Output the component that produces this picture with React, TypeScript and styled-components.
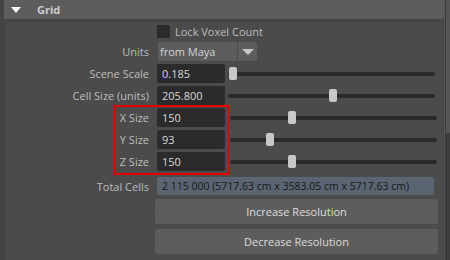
import React from "react";
import styled, { createGlobalStyle } from "styled-components";

const GlobalStyle = createGlobalStyle`
  html, body {
    margin: 0;
    padding: 0;
    background: #444444;
  }
  body {
    font-family: "Open Sans", "DejaVu Sans", sans-serif;
    font-size: 11px;
    color: #bdbdbd;
  }
`;

type SliderRow = { label: string; value: string; thumb: number; marked?: boolean };

const rows: SliderRow[] = [
  { label: "Scene Scale", value: "0.185", thumb: 1 },
  { label: "Cell Size (units)", value: "205.800", thumb: 101 },
  { label: "X Size", value: "150", thumb: 58, marked: true },
  { label: "Y Size", value: "93", thumb: 36, marked: true },
  { label: "Z Size", value: "150", thumb: 58, marked: true },
];

export default function App() {
  return (
    <>
      <GlobalStyle />
      <Screen>
        <Panel>
          <Header>
            <Caret />
            <Title>Grid</Title>
          </Header>
          <Body>
            <Row>
              <span />
              <CheckLine>
                <Check />
                <span>Lock Voxel Count</span>
              </CheckLine>
            </Row>
            <Row>
              <Label>Units</Label>
              <Dropdown>
                <DropValue>from Maya</DropValue>
                <DropArrow>
                  <Caret $small />
                </DropArrow>
              </Dropdown>
            </Row>
            {rows.map((r) => (
              <Row key={r.label}>
                <Label>{r.label}</Label>
                <FieldLine>
                  <Input>{r.value}</Input>
                  <Slider $marked={r.marked}>
                    <Track />
                    <Thumb style={{ left: r.thumb }} />
                  </Slider>
                </FieldLine>
              </Row>
            ))}
            <Row $mt={3}>
              <Label>Total Cells</Label>
              <Readout>2 115 000 (5717.63 cm x 3583.05 cm x 5717.63 cm)</Readout>
            </Row>
            <Row $mt={1}>
              <span />
              <Button>Increase Resolution</Button>
            </Row>
            <Row $mt={2}>
              <span />
              <Button>Decrease Resolution</Button>
            </Row>
            <Marker />
          </Body>
        </Panel>
        <Scrollbar>
          <ScrollThumb />
        </Scrollbar>
      </Screen>
    </>
  );
}

const Screen = styled.div`
  display: flex;
  width: 450px;
  height: 260px;
  overflow: hidden;
  background: #444444;
`;

const Panel = styled.div`
  flex: 1;
  display: flex;
  flex-direction: column;
  padding-left: 4px;
`;

const Header = styled.div`
  display: flex;
  align-items: center;
  height: 19px;
  background: #5d5d5d;
  border-bottom-right-radius: 3px;
  padding-left: 7px;
`;

const Caret = styled.div<{ $small?: boolean }>`
  width: 0;
  height: 0;
  border-left: ${(p) => (p.$small ? 6 : 5)}px solid transparent;
  border-right: ${(p) => (p.$small ? 6 : 5)}px solid transparent;
  border-top: 6px solid ${(p) => (p.$small ? "#c8c8c8" : "#ffffff")};
`;

const Title = styled.span`
  margin-left: 16px;
  font-weight: bold;
  font-size: 11px;
  color: #cccccc;
`;

const Body = styled.div`
  position: relative;
  flex: 1;
  margin-top: 3px;
  margin-left: 2px;
  margin-right: 1px;
  padding-top: 1px;
  background: #4b4b4b;
  display: flex;
  flex-direction: column;
  gap: 3px;
`;

const Row = styled.div<{ $mt?: number }>`
  display: grid;
  grid-template-columns: 143px 1fr;
  column-gap: 8px;
  align-items: center;
  margin-top: ${(p) => p.$mt ?? 0}px;
`;

const Label = styled.span`
  text-align: right;
  white-space: nowrap;
  color: #bdbdbd;
`;

const CheckLine = styled.label`
  display: flex;
  align-items: center;
  gap: 5px;
  height: 16px;
  color: #bdbdbd;
`;

const Check = styled.span`
  width: 13px;
  height: 13px;
  background: #2b2b2b;
  border-radius: 1px;
`;

const Dropdown = styled.div`
  display: flex;
  height: 19px;
  width: 99px;
  margin-left: 1px;
  gap: 1px;
`;

const DropValue = styled.div`
  flex: 1;
  background: #5d5d5d;
  color: #d2d2d2;
  padding-left: 2px;
  display: flex;
  align-items: center;
  border-radius: 2px 0 0 2px;
`;

const DropArrow = styled.div`
  width: 19px;
  background: #5d5d5d;
  display: flex;
  align-items: center;
  justify-content: center;
  border-radius: 0 2px 2px 0;
`;

const FieldLine = styled.div`
  display: flex;
  align-items: center;
  height: 19px;
`;

const Input = styled.div`
  width: 63px;
  height: 19px;
  padding-left: 5px;
  background: #2b2b2b;
  color: #d8d8d8;
  border-radius: 2px;
  display: flex;
  align-items: center;
`;

const Slider = styled.div<{ $marked?: boolean }>`
  position: relative;
  width: 207px;
  height: 19px;
  margin-left: ${(p) => (p.$marked ? 5 : 3)}px;
  display: flex;
  align-items: center;
`;

const Track = styled.div`
  width: 100%;
  height: 4px;
  border-radius: 2px;
  background: #2b2b2b;
`;

const Thumb = styled.div`
  position: absolute;
  top: 3px;
  width: 8px;
  height: 13px;
  border-radius: 2px;
  background: #c8c8c8;
`;

const Readout = styled.div`
  width: 272px;
  height: 18px;
  padding-left: 5px;
  background: #5b6572;
  color: #161616;
  font-size: 10.5px;
  border-radius: 2px;
  display: flex;
  align-items: center;
  white-space: nowrap;
`;

const Button = styled.button`
  margin-left: -2px;
  width: 283px;
  height: 25px;
  border: none;
  border-radius: 2px;
  background: #5d5d5d;
  color: #dedede;
  font-family: inherit;
  font-size: 11px;
  padding: 0;
`;

const Marker = styled.div`
  position: absolute;
  left: 108px;
  top: 83px;
  width: 112px;
  height: 66px;
  border: 2px solid #e60000;
  pointer-events: none;
`;

const Scrollbar = styled.div`
  width: 5px;
  background: #3c3c3c;
  border-left: 1px solid #555555;
`;

const ScrollThumb = styled.div`
  height: 133px;
  margin-left: 1px;
  background: #555555;
`;
